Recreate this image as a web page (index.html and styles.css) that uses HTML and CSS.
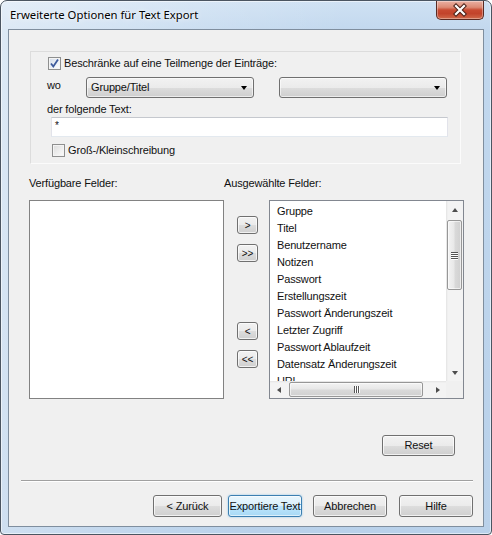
FILE: index.html
```html
<!DOCTYPE html>
<html lang="de">
<head>
<meta charset="utf-8">
<title>Erweiterte Optionen für Text Export</title>
<link rel="stylesheet" href="styles.css">
</head>
<body>
<div class="window">
  <div class="titlebar">
    <span class="title">Erweiterte Optionen für Text Export</span>
    <div class="close">
      <svg width="46" height="17" viewBox="0 0 46 17">
        <path d="M19 4 L27 12 M27 4 L19 12" stroke="#4a2118" stroke-width="4.2" stroke-linecap="square"/>
        <path d="M19 4 L27 12 M27 4 L19 12" stroke="#ffffff" stroke-width="2.2" stroke-linecap="square"/>
      </svg>
    </div>
  </div>
  <div class="client">
    <div class="panel">
      <div class="row check-row first">
        <span class="cb checked">
          <svg width="11" height="11" viewBox="0 0 11 11"><path d="M2 5.5 L4.3 8.5 L9 1.5" fill="none" stroke="#3d5a9c" stroke-width="1.8"/></svg>
        </span>
        <span class="cb-label">Beschränke auf eine Teilmenge der Einträge:</span>
      </div>
      <div class="row where-row">
        <span class="wo">wo</span>
        <div class="combo first-combo"><span class="combo-text">Gruppe/Titel</span><i class="drop"></i></div>
        <div class="combo second-combo"><span class="combo-text"></span><i class="drop"></i></div>
      </div>
      <div class="text-label">der folgende Text:</div>
      <div class="textbox">*</div>
      <div class="row check-row second">
        <span class="cb"></span>
        <span class="cb-label">Groß-/Kleinschreibung</span>
      </div>
    </div>

    <div class="fields">
      <div class="field-heads">
        <span class="head-left">Verfügbare Felder:</span>
        <span class="head-right">Ausgewählte Felder:</span>
      </div>
      <div class="field-body">
        <div class="listbox list-left"></div>
        <div class="movers">
          <button class="btn mover m1">&gt;</button>
          <button class="btn mover m2">&gt;&gt;</button>
          <button class="btn mover m3">&lt;</button>
          <button class="btn mover m4">&lt;&lt;</button>
        </div>
        <div class="listbox list-right">
          <div class="items">
            <div class="item">Gruppe</div>
            <div class="item">Titel</div>
            <div class="item">Benutzername</div>
            <div class="item">Notizen</div>
            <div class="item">Passwort</div>
            <div class="item">Erstellungszeit</div>
            <div class="item">Passwort Änderungszeit</div>
            <div class="item">Letzter Zugriff</div>
            <div class="item">Passwort Ablaufzeit</div>
            <div class="item">Datensatz Änderungszeit</div>
            <div class="item">URL</div>
          </div>
          <div class="vscroll">
            <span class="sb-btn"><i class="tri up"></i></span>
            <span class="vthumb"><i class="grip"></i><i class="grip"></i><i class="grip"></i><i class="grip"></i></span>
            <span class="sb-fill"></span>
            <span class="sb-btn"><i class="tri down"></i></span>
          </div>
          <div class="hscroll">
            <span class="sb-btn"><i class="tri left"></i></span>
            <span class="hthumb"><i class="hgrip"></i><i class="hgrip"></i><i class="hgrip"></i></span>
            <span class="sb-fill"></span>
            <span class="sb-btn"><i class="tri right"></i></span>
          </div>
          <div class="corner"></div>
        </div>
      </div>
    </div>

    <div class="reset-row">
      <button class="btn reset">Reset</button>
    </div>
    <div class="separator"></div>
    <div class="footer">
      <button class="btn back">&lt; Zurück</button>
      <button class="btn export default">Exportiere Text</button>
      <button class="btn cancel">Abbrechen</button>
      <button class="btn help">Hilfe</button>
    </div>
  </div>
</div>
</body>
</html>
```

FILE: styles.css
```css
* { box-sizing: border-box; }

html, body {
  margin: 0;
  padding: 0;
  background: #ffffff;
}

body {
  width: 492px;
  height: 535px;
  overflow: hidden;
  font-family: "Liberation Sans", Arial, sans-serif;
  font-size: 11px;
  letter-spacing: -0.15px;
  color: #111;
}

.window {
  width: 492px;
  height: 535px;
  border: 1px solid #4b5561;
  border-radius: 7px 7px 4px 4px;
  background:
    linear-gradient(100deg, rgba(255,255,255,0.45) 0%, rgba(255,255,255,0.15) 35%, rgba(255,255,255,0) 60%),
    linear-gradient(to bottom, #cfe1f3 0%, #c2d8ee 30px, #b9d1ea 100%);
  box-shadow: inset 0 0 0 1px rgba(255,255,255,0.55);
  display: flex;
  flex-direction: column;
}

.titlebar {
  height: 28px;
  display: flex;
  align-items: flex-start;
}

.title {
  font-family: "Noto Sans", "Open Sans", sans-serif;
  font-size: 11.3px;
  letter-spacing: 0;
  line-height: 16px;
  margin: 6px 0 0 9px;
  color: #000;
  text-shadow: 0 0 6px rgba(255,255,255,0.9), 0 0 2px rgba(255,255,255,0.9);
}

.close {
  margin-left: auto;
  margin-right: 7px;
  width: 48px;
  height: 19px;
  border: 1px solid #5a2a22;
  border-top: none;
  border-radius: 0 0 5px 5px;
  background: linear-gradient(to bottom, #eab0a3 0%, #dc8a74 35%, #c84a31 50%, #c2432b 70%, #d06a4b 100%);
  box-shadow: inset 0 0 0 1px rgba(255,255,255,0.35);
  display: flex;
  align-items: center;
  justify-content: center;
}

.close svg { display: block; }

.client {
  margin-left: 7px;
  width: 476px;
  height: 498px;
  border: 1px solid #7f8e9e;
  background: #f0f0f0;
  display: flex;
  flex-direction: column;
}

/* ---- top panel ---- */
.panel {
  margin: 21px 0 0 21px;
  width: 431px;
  height: 113px;
  border: 1px solid #dcdcdc;
  border-right-color: #fbfbfb;
  border-bottom-color: #fbfbfb;
  padding-left: 16px;
  display: flex;
  flex-direction: column;
}

.row {
  display: flex;
  align-items: center;
}

.check-row { height: 13px; }
.check-row.first { margin-top: 5px; padding-left: 1px; }
.check-row.second { margin-top: 7px; padding-left: 5px; }

.cb {
  width: 13px;
  height: 13px;
  border: 1px solid #8e8f8f;
  background: linear-gradient(135deg, #dcdcdc 0%, #f0f0f0 60%, #fbfbfb 100%);
  box-shadow: inset 0 0 0 1px #f4f4f4;
  display: flex;
  align-items: center;
  justify-content: center;
  flex: none;
}

.cb.checked {
  background: linear-gradient(135deg, #d2dbe8 0%, #eef2f8 60%, #fbfcfe 100%);
}

.cb svg { display: block; }

.cb-label {
  margin-left: 3px;
  line-height: 13px;
  white-space: nowrap;
}

.where-row {
  margin-top: 7px;
  height: 21px;
  align-items: flex-start;
}

.wo {
  width: 39px;
  line-height: 13px;
  margin-top: 2px;
}

.combo {
  width: 168px;
  height: 21px;
  border: 1px solid #707070;
  border-radius: 3px;
  background: linear-gradient(to bottom, #f2f2f2 0%, #ebebeb 50%, #dddddd 51%, #cfcfcf 100%);
  box-shadow: inset 0 0 0 1px rgba(255,255,255,0.6);
  display: flex;
  align-items: center;
  padding: 0 6px 0 4px;
}

.second-combo { margin-left: 25px; }

.combo-text {
  flex: 1;
  line-height: 13px;
  white-space: nowrap;
}

.drop {
  width: 0;
  height: 0;
  border-left: 3.5px solid transparent;
  border-right: 3.5px solid transparent;
  border-top: 4px solid #000;
  margin-top: 1px;
}

.text-label {
  margin-top: 5px;
  line-height: 13px;
  height: 13px;
}

.textbox {
  margin: 1px 0 0 4px;
  width: 397px;
  height: 20px;
  background: #fff;
  border: 1px solid;
  border-color: #c5c8ce #e2e3ea #e3e9ef #e2e3ea;
  padding: 2px 3px;
  line-height: 12px;
  font-size: 10px;
}

/* ---- field lists ---- */
.fields {
  margin: 13px 0 0 20px;
}

.field-heads {
  display: flex;
  height: 13px;
  line-height: 13px;
}

.head-left { width: 195px; }

.field-body {
  margin-top: 10px;
  display: flex;
  align-items: flex-start;
}

.listbox {
  width: 195px;
  height: 199px;
  background: #fff;
  border: 1px solid #828790;
}

.list-left { border-color: #828282; }

.movers {
  margin-left: 13px;
  width: 21px;
  display: flex;
  flex-direction: column;
}

.btn {
  font-family: "Liberation Sans", Arial, sans-serif;
  font-size: 11px;
  letter-spacing: -0.15px;
  color: #111;
  padding: 0;
  margin: 0;
  border: 1px solid #707070;
  border-radius: 3px;
  background: linear-gradient(to bottom, #f2f2f2 0%, #ebebeb 50%, #dddddd 51%, #cfcfcf 100%);
  box-shadow: inset 0 0 0 1px rgba(255,255,255,0.7);
  line-height: 13px;
  text-align: center;
  white-space: nowrap;
}

.mover {
  height: 18px;
  width: 21px;
  font-size: 10px;
}

.m1 { margin-top: 16px; }
.m2 { margin-top: 10px; }
.m3 { margin-top: 60px; }
.m4 { margin-top: 10px; }

.list-right {
  margin-left: 11px;
  display: grid;
  grid-template-columns: 1fr 17px;
  grid-template-rows: 1fr 17px;
  overflow: hidden;
}

.items {
  padding: 2px 0 0 7px;
  overflow: hidden;
  min-height: 0;
}

.item {
  height: 17px;
  line-height: 17px;
  white-space: nowrap;
}

.vscroll {
  display: flex;
  flex-direction: column;
  background: linear-gradient(to right, #e3e3e3 0, #f3f3f3 2px, #f3f3f3 100%);
  min-height: 0;
}

.hscroll {
  display: flex;
  flex-direction: row;
  background: linear-gradient(to bottom, #e3e3e3 0, #f3f3f3 2px, #f3f3f3 100%);
}

.corner { background: #f0f0f0; }

.sb-btn {
  width: 17px;
  height: 17px;
  flex: none;
  display: flex;
  align-items: center;
  justify-content: center;
}

.sb-fill { flex: 1; }

.tri {
  width: 0;
  height: 0;
  display: block;
}

.tri.up { border-left: 3.5px solid transparent; border-right: 3.5px solid transparent; border-bottom: 4px solid #4d4d4d; }
.tri.down { border-left: 3.5px solid transparent; border-right: 3.5px solid transparent; border-top: 4px solid #4d4d4d; }
.tri.left { border-top: 3.5px solid transparent; border-bottom: 3.5px solid transparent; border-right: 4px solid #4d4d4d; }
.tri.right { border-top: 3.5px solid transparent; border-bottom: 3.5px solid transparent; border-left: 4px solid #4d4d4d; }

.vthumb {
  margin: 2px 0 0 1px;
  width: 15px;
  height: 70px;
  border: 1px solid #979797;
  border-radius: 2px;
  background: linear-gradient(to right, #f3f3f3 0%, #e8e8e8 45%, #d9d9d9 55%, #d0d0d0 100%);
  box-shadow: inset 0 0 0 1px rgba(255,255,255,0.6);
  display: flex;
  flex-direction: column;
  align-items: center;
  justify-content: center;
  gap: 1px;
  flex: none;
}

.grip {
  display: block;
  width: 7px;
  height: 1px;
  background: #555;
  box-shadow: 0 1px 0 #fff;
}

.hthumb {
  margin: 1px 0 0 2px;
  width: 134px;
  height: 15px;
  border: 1px solid #979797;
  border-radius: 2px;
  background: linear-gradient(to bottom, #f3f3f3 0%, #e8e8e8 45%, #d9d9d9 55%, #d0d0d0 100%);
  box-shadow: inset 0 0 0 1px rgba(255,255,255,0.6);
  display: flex;
  align-items: center;
  justify-content: center;
  gap: 1px;
  flex: none;
}

.hgrip {
  display: block;
  width: 1px;
  height: 7px;
  background: #555;
  box-shadow: 1px 0 0 #fff;
}

/* ---- bottom ---- */
.reset-row {
  margin-top: 36px;
  display: flex;
  justify-content: flex-end;
  padding-right: 28px;
}

.reset {
  width: 73px;
  height: 21px;
}

.separator {
  margin: 24px 10px 0 12px;
  height: 2px;
  border-top: 1px solid #a0a0a0;
  border-bottom: 1px solid #ffffff;
}

.footer {
  margin-top: 13px;
  display: flex;
  justify-content: flex-end;
  padding-right: 10px;
}

.footer .btn { height: 22px; width: 74px; }
.footer .back { width: 69px; }
.footer .export { margin-left: 6px; }
.footer .cancel { margin-left: 11px; }
.footer .help { margin-left: 12px; }

.btn.default {
  border-color: #3c7fb1;
  background: linear-gradient(to bottom, #eaf6fd 0%, #d9f0fc 50%, #bee6fd 51%, #a7d9f5 100%);
  box-shadow: inset 0 0 0 1px rgba(255,255,255,0.6), 0 0 2px rgba(60,160,230,0.6);
}
```
